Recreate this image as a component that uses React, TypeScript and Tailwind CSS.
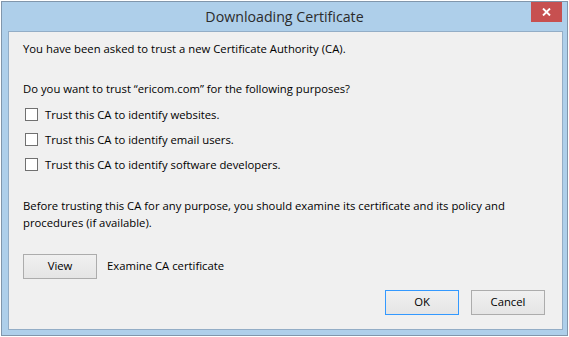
import React from 'react';

const purposes = [
  'Trust this CA to identify websites.',
  'Trust this CA to identify email users.',
  'Trust this CA to identify software developers.',
];

const font = { fontFamily: '"Open Sans", "Noto Sans", sans-serif' };

const DialogButton: React.FC<{ label: string; primary?: boolean }> = ({ label, primary }) => (
  <button
    className={
      'w-[74px] h-[25px] flex items-center justify-center text-[11.3px] text-black bg-gradient-to-b from-[#f0f0f0] to-[#e5e5e5] border ' +
      (primary ? 'border-[#3399ff]' : 'border-[#acacac]')
    }
  >
    {label}
  </button>
);

const Checkbox: React.FC = () => (
  <span className="w-[13px] h-[13px] border border-[#707070] bg-white shrink-0" />
);

export default function App() {
  return (
    <div className="w-[569px] h-[337px] bg-white pt-px pl-px" style={font}>
      <div className="w-[567px] h-[335px] border border-[#8196ab] bg-[#aecfea] flex flex-col">
        {/* Title bar */}
        <div className="relative h-[29px] flex items-center justify-center shrink-0">
          <span className="text-[14.2px] text-[#2b2b2b]">Downloading Certificate</span>
          <div className="absolute top-0 right-[5px] w-[31px] h-[20px] bg-[#c75050] flex items-center justify-center">
            <svg width="9" height="8" viewBox="0 0 9 8">
              <path d="M1 0.5 L8 7.5 M8 0.5 L1 7.5" stroke="#fff" strokeWidth="1.9" />
            </svg>
          </div>
        </div>

        {/* Content */}
        <div className="ml-[6px] mr-[4px] h-[299px] border border-[#93adc6] bg-[#f0f0f0] pl-[14px] pr-[17px] pt-[9px] text-[11.3px] text-black">
          <p className="h-[16px] leading-[16px]">
            You have been asked to trust a new Certificate Authority (CA).
          </p>
          <p className="mt-[24px] h-[16px] leading-[16px]">
            Do you want to trust &ldquo;ericom.com&rdquo; for the following purposes?
          </p>
          <div className="mt-[5px] flex flex-col">
            {purposes.map((p) => (
              <label key={p} className="h-[25px] flex items-center pl-[2px] gap-[7px]">
                <Checkbox />
                <span className="leading-[16px]">{p}</span>
              </label>
            ))}
          </div>
          <p className="mt-[20px] leading-[17px] w-[510px]">
            Before trusting this CA for any purpose, you should examine its certificate and its policy and procedures (if available).
          </p>
          <div className="mt-[23px] flex items-center gap-[10px]">
            <DialogButton label="View" />
            <span>Examine CA certificate</span>
          </div>
          <div className="mt-[11px] flex justify-end gap-[12px]">
            <DialogButton label="OK" primary />
            <DialogButton label="Cancel" />
          </div>
        </div>
      </div>
    </div>
  );
}
